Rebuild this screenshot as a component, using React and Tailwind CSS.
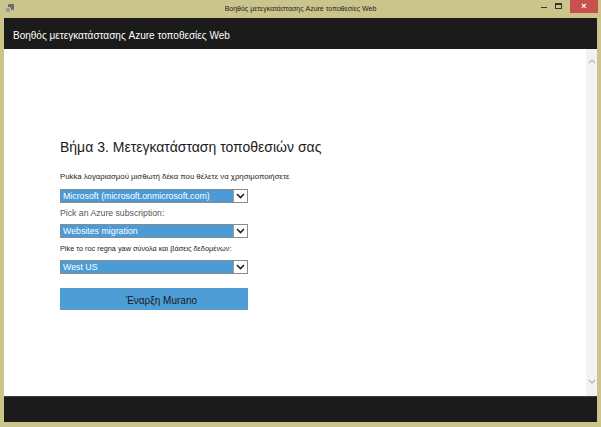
import React from "react";

function Select({ value }) {
  return (
    <div className="flex h-[14px] w-[188px] border border-[#8a8a8a] bg-[#4a9bd6]">
      <div className="flex-1 pl-[2px] text-[8.8px] leading-[12px] text-white">{value}</div>
      <div className="flex w-[14px] items-center justify-center border-l border-[#9a9a9a] bg-white">
        <svg width="9" height="6" viewBox="0 0 9 6">
          <path d="M1 1 L4.5 4.5 L8 1" fill="none" stroke="#222" strokeWidth="1.6" />
        </svg>
      </div>
    </div>
  );
}

export default function App() {
  return (
    <div
      className="flex h-[427px] w-[601px] flex-col bg-[#cbc58c]"
      style={{ fontFamily: '"Liberation Sans", Arial, sans-serif' }}
    >
      {/* Title bar */}
      <div className="relative flex h-[18px] items-center">
        <div className="absolute left-[5px] top-[4px] h-[9px] w-[9px]">
          <div className="absolute left-[3px] top-0 h-[6px] w-[6px] rounded-[1px] bg-[#6b6b6b]" />
          <div className="absolute left-0 top-[3px] h-[6px] w-[6px] rounded-[1px] border border-[#cbc58c] bg-[#9a9a9a]" />
        </div>
        <div className="w-full text-center text-[7px] leading-[18px] text-[#222]">
          Βοηθός μετεγκατάστασης Azure τοποθεσίες Web
        </div>
        <div className="absolute right-[3px] top-0 flex h-[13px] items-start">
          <div className="mr-[8px] mt-[7px] h-[1px] w-[6px] bg-[#333]" />
          <div className="mr-[8px] mt-[3px] h-[6px] w-[7px] border border-[#333] border-t-2" />
          <div className="flex h-[13px] w-[28px] items-center justify-center bg-[#c9504f] text-[9px] font-bold leading-none text-white">
            ×
          </div>
        </div>
      </div>

      {/* Window client */}
      <div className="mx-[4px] flex flex-1 flex-col">
        <div className="flex h-[31px] items-center bg-[#1b1b1b] pl-[9px] pt-[3px] text-[10px] text-white">
          Βοηθός μετεγκατάστασης Azure τοποθεσίες Web
        </div>
        <div className="flex flex-1 bg-white">
          <div className="flex flex-1 flex-col pl-[56px] pt-[89px]">
            <div className="h-[18px] text-[14px] leading-[18px] text-[#1a1a1a]">
              Βήμα 3. Μετεγκατάσταση τοποθεσιών σας
            </div>
            <div className="mt-[15px] h-[12px] text-[7.8px] leading-[12px] text-[#2a2418]">
              Pukka λογαριασμού μισθωτή δέκα που θέλετε να χρησιμοποιήσετε
            </div>
            <div className="mt-[6px]">
              <Select value="Microsoft (microsoft.onmicrosoft.com)" />
            </div>
            <div className="mt-[4px] h-[12px] text-[8.7px] leading-[12px] text-[#555]">
              Pick an Azure subscription:
            </div>
            <div className="mt-[5px]">
              <Select value="Websites migration" />
            </div>
            <div className="mt-[5px] h-[12px] text-[7.3px] leading-[12px] text-[#222]">
              Pike το roc regna yaw σύνολα και βάσεις δεδομένων:
            </div>
            <div className="mt-[5px]">
              <Select value="West US" />
            </div>
            <div className="mt-[14px] flex h-[22px] w-[188px] items-end justify-center bg-[#4f9dd7] pb-[3px] pl-[15px] text-[10px] leading-[13px] text-[#1a1a1a]">
              Έναρξη Murano
            </div>
          </div>
          <div className="flex w-[11px] flex-col items-center justify-between bg-[#f2f2f2] pb-[12px] pt-[10px]">
            <svg width="8" height="5" viewBox="0 0 8 5">
              <path d="M1 4 L4 1 L7 4" fill="none" stroke="#b8b8b8" strokeWidth="1.3" />
            </svg>
            <svg width="8" height="5" viewBox="0 0 8 5">
              <path d="M1 1 L4 4 L7 1" fill="none" stroke="#b8b8b8" strokeWidth="1.3" />
            </svg>
          </div>
        </div>
        <div className="h-[26px] border-t border-[#3c3c3c] bg-[#1b1b1b]" />
      </div>
      <div className="h-[5px]" />
    </div>
  );
}
